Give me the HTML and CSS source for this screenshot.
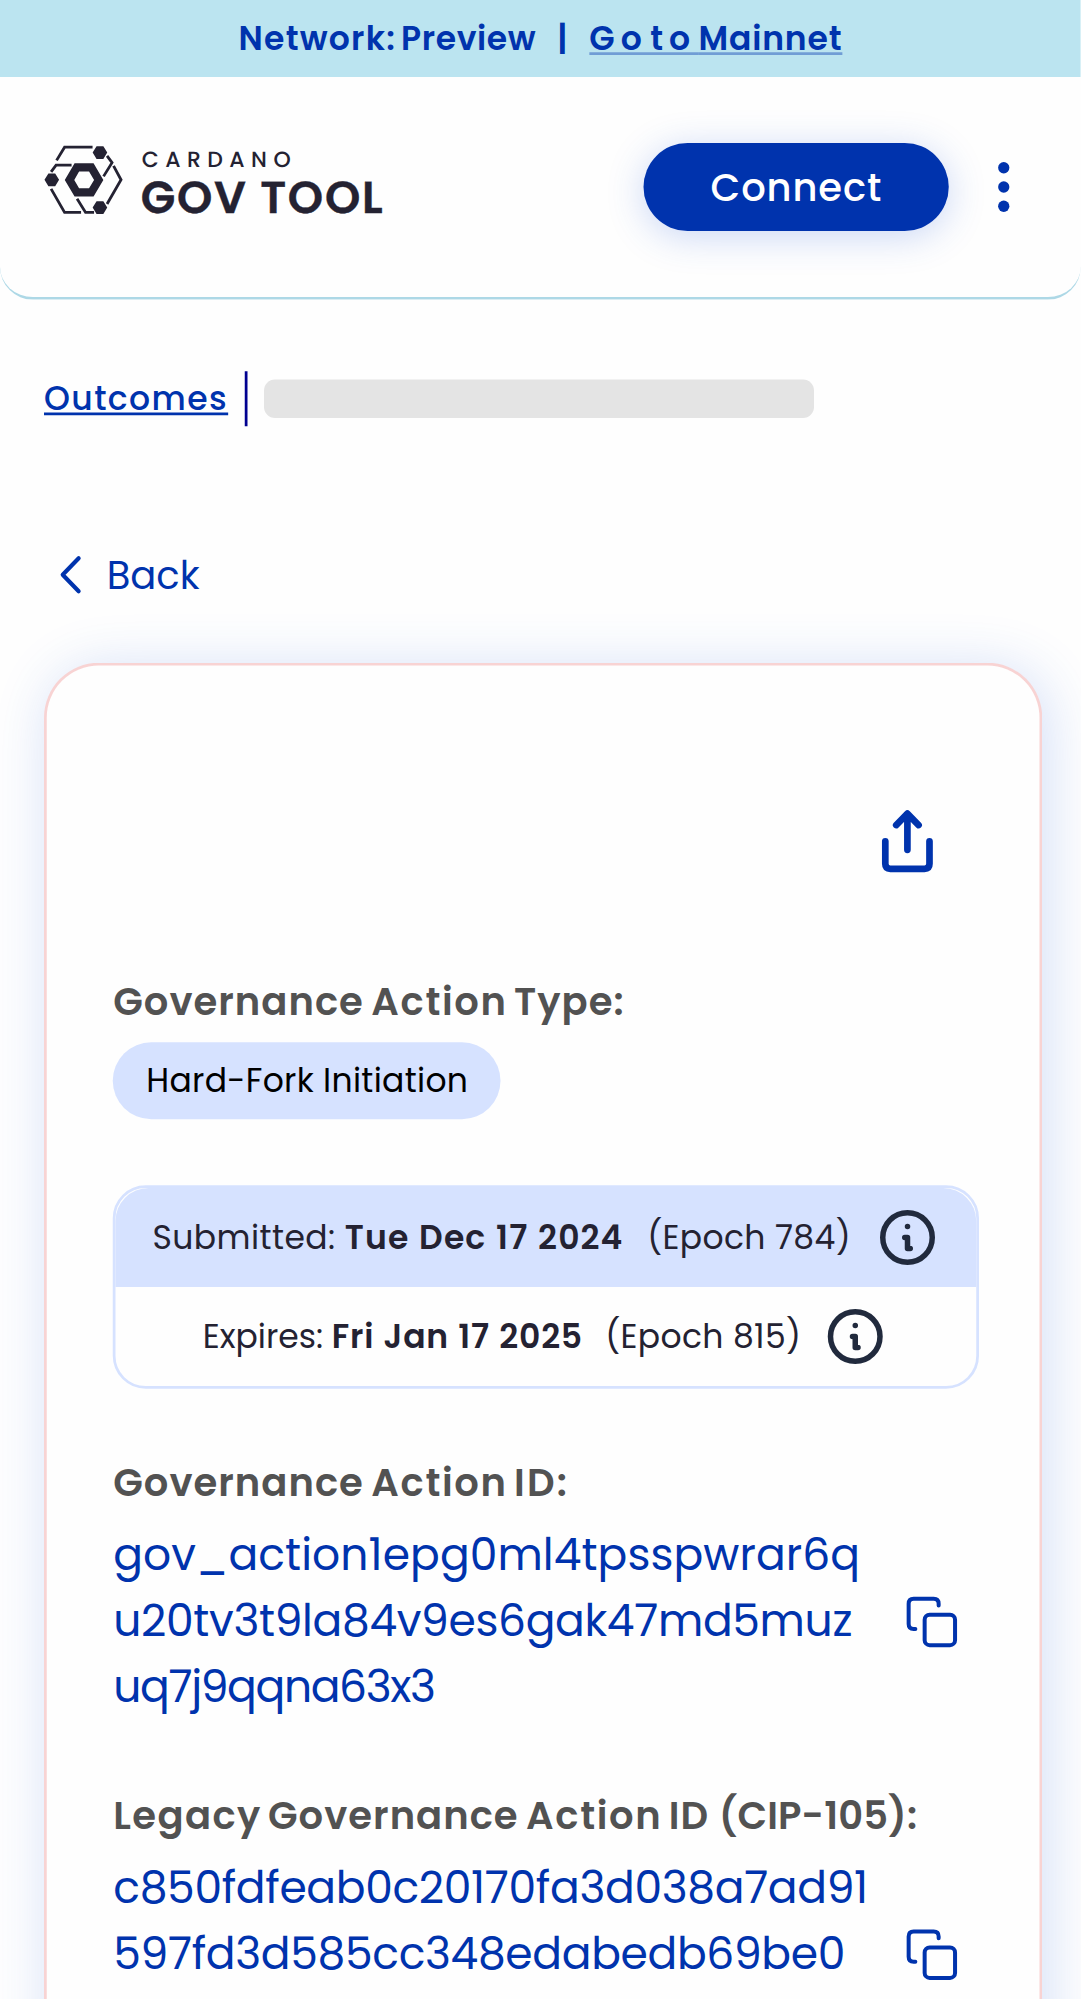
FILE: index.html
```
<!DOCTYPE html>
<html lang="en">
<head>
<meta charset="utf-8">
<title>Cardano GovTool</title>
<link rel="stylesheet" href="styles.css">
</head>
<body>
<div class="page">
<div class="network-bar">
  <span class="network-name">Network: <span class="network-value">Preview</span></span>
  <span class="network-sep">|</span>
  <a class="network-link"><span class="wide">Go to </span>Mainnet</a>
</div>
<header class="topbar">
  <svg class="brand" viewBox="0 -1.900 345 70" fill="none" stroke="#242232" stroke-width="2.8">
    <path d="M12.500 15.500 20.500 2.300H48.500M63 11 68 17.800 59.500 31.500"/>
    <path d="M7 27 12 20.200H27.500"/>
    <path d="M69.500 21 77 34.900 63 59.200"/>
    <path d="M7 44 20.500 67.600H37M33 54 41.500 67.600H50"/>
    <g fill="#242232" stroke="none">
      <path d="M52.500 1.300h6.800l3.900 6.400-3.900 6.400h-6.800l-3.900-6.400zM4.300 28.500h6.800l3.900 6.400-3.900 6.400H4.300L.4 34.900zM52.500 56.300h6.800l3.900 6.400-3.900 6.400h-6.800l-3.900-6.400z"/>
      <path fill-rule="evenodd" d="M30.500 18.300h19L59.300 35 49.500 51.700h-19L20.700 35zM35 26.700 30.200 35 35 43.300h10L50 35l-5-8.300z"/>
      <text class="brand-top" x="97.700" y="22" textLength="149">CARDANO</text>
      <text class="brand-name" x="96.700" y="68" textLength="242">GOV TOOL</text>
    </g>
  </svg>
  <div class="actions">
    <button class="connect">Connect</button>
    <svg width="24" height="24" viewBox="0 0 24 24" fill="#0033ad"><circle cx="12" cy="5" r="2.050"/><circle cx="12" cy="12" r="2.050"/><circle cx="12" cy="19" r="2.050"/></svg>
  </div>
</header>
<nav class="crumbs"><a class="crumb-link">Outcomes</a><span class="crumb-sep"></span><span class="skeleton"></span></nav>
<div class="back"><svg width="8" height="14" viewBox=".4 0 8 14" fill="none" stroke="#0033ad" stroke-width="1.500" stroke-linecap="round" stroke-linejoin="round"><path d="M7 1 1.200 7 7 13"/></svg><span>Back</span></div>
<main class="card">
  <div class="share"><svg width="18.550" height="22.730" viewBox="-1.900 1.400 51 62.500" fill="none" stroke="#0033ad" stroke-width="6.700" stroke-linecap="round" stroke-linejoin="round"><path d="M3.400 31.400V54q0 5 5 5H42.600q5 0 5-5V31.400M25.500 40V4M14.300 15.200 25.500 3.800 36.700 15.200"/></svg></div>
  <h2 class="label">Governance <span class="word-action">Action </span>Type:</h2>
  <div class="chip">Hard-Fork Initiation</div>
  <section class="dates">
    <div class="date-row date-row-on"><p><span class="date-name">Submitted: </span><b>Tue Dec 17 2024</b><span class="epoch">(Epoch 784)</span></p>
      <svg class="info" width="24" height="24" viewBox="0 0 24 24"><circle cx="12" cy="12" r="9"/><path d="M11 12h1v4h1M12 8h.01"/></svg></div>
    <div class="date-row date-row-end"><p>Expires: <b>Fri Jan 17 2025</b><span class="epoch">(Epoch 815)</span></p>
      <svg class="info" width="24" height="24" viewBox="0 0 24 24"><circle cx="12" cy="12" r="9"/><path d="M11 12h1v4h1M12 8h.01"/></svg></div>
  </section>
  <h2 class="label">Governance <span class="word-action">Action </span><span class="word-id">ID:</span></h2>
  <div class="id-row">
    <p class="hash"><span class="line-full">gov_action1epg0ml4tpsspwrar6q</span><br>u20tv3t9la84v9es6gak47md5muz<br><span class="line-tight">uq7j9qqna63x3</span></p>
    <svg class="copy" viewBox="-1.900 1 50.400 50.400"><rect x="18" y="18" width="30.400" height="30.400" rx="5"/><path d="M8.700 32.300H7q-5 0-5-5V7q0-5 5-5H27q5 0 5 5v1.700"/></svg>
  </div>
  <h2 class="label"><span class="word-legacy">Legacy </span>Governance <span class="word-action">Action </span>ID <span class="word-cip">(CIP-105):</span></h2>
  <div class="id-row id-row-legacy">
    <p class="hash">c850fdfeab0c20170fa3d038a7ad91<br>597fd3d585cc348edabedb69be0</p>
    <svg class="copy" viewBox="-1.900 1 50.400 50.400"><rect x="18" y="18" width="30.400" height="30.400" rx="5"/><path d="M8.700 32.300H7q-5 0-5-5V7q0-5 5-5H27q5 0 5 5v1.700"/></svg>
  </div>
</main>
</div>
</body>
</html>
```
FILE: styles.css
```
* { box-sizing: border-box; }
html, body { height: 1999px; overflow: hidden; }
body { margin: 0; background: #fefefe; }
h2, p { margin: 0; }
svg { overflow: visible; }

/* Phone layout, 393 units wide, enlarged to the window */
.page {
  width: 393.090px;
  height: 726.900px;
  overflow: hidden;
  transform: scale(2.75);
  transform-origin: 0 0;
  display: flex;
  flex-direction: column;
  color: #242232;
  background: #fefefe;
  font-family: Poppins, Inter, "Liberation Sans", sans-serif;
  font-size: 12px;
  white-space: nowrap;
}
.page > * { flex-shrink: 0; }

.network-bar {
  height: 28px;
  display: flex;
  justify-content: center;
  background: #bbe4f0;
  color: #0033ad;
  font-weight: 600;
  line-height: 28px;
}
.network-name { letter-spacing: .45px; word-spacing: -1.500px; }
.network-value { letter-spacing: .22px; }
.network-sep { margin: 0 8px 0 7.600px; }
.network-link { letter-spacing: .3px; text-decoration: underline; text-decoration-color: rgba(0, 51, 173, .4); }
.wide { letter-spacing: 2.200px; word-spacing: -4.200px; }

.topbar {
  height: 81px;
  padding: 24px 16px;
  display: flex;
  justify-content: space-between;
  background: #fefefe;
  border-bottom: 1px solid #add8e6;
  border-radius: 0 0 12px 12px;
}
.brand { width: 125.450px; height: 25.450px; }
.brand text { text-rendering: geometricPrecision; }
.brand-top { font-size: 22px; font-weight: 500; }
.brand-name { font-size: 45px; font-weight: 600; stroke: #242232; stroke-width: .4px; }
.actions { display: flex; align-items: center; gap: 8px; }
.connect {
  width: 111px;
  height: 32px;
  padding: 0;
  border: 0;
  border-radius: 16px;
  background: #0033ad;
  color: #fff;
  font: 500 14px Poppins, Inter, sans-serif;
  letter-spacing: .32px;
  box-shadow: 0 2px 13px rgba(47, 98, 220, .25);
}

.crumbs { height: 20px; margin: 26px 0 0 16px; display: flex; color: #0033ad; }
.crumb-link { font-weight: 500; line-height: 20px; letter-spacing: .52px; text-decoration: underline; }
.crumb-sep { width: 1px; margin: 0 6px; background: #000090; }
.skeleton { width: 200px; height: 14px; margin-top: 3.400px; border-radius: 4px; background: #e4e4e4; }

.back { height: 22px; margin: 43.500px 0 0 21.700px; display: flex; align-items: center; color: #0033ad; font-size: 14px; }
.back svg { margin-bottom: 1.200px; }
.back span { margin-left: 9.100px; }

.card {
  flex: 1;
  width: 362.800px;
  margin: 20.500px 0 0 16.200px;
  padding: 52.900px 22px 0 24px;
  border: 1px solid #f8d3d3;
  border-bottom: 0;
  border-radius: 20px 20px 0 0;
  background: #fefefe;
  box-shadow: 2px 2px 20px rgba(47, 98, 220, .2);
}
.share { height: 22.730px; padding-right: 17px; display: flex; justify-content: flex-end; }
.label { margin-top: 24px; color: #525252; font-size: 14px; font-weight: 600; line-height: 21px; letter-spacing: .37px; word-spacing: -1px; }
.share + .label { margin-top: 36.400px; }
.word-action { letter-spacing: .6px; word-spacing: -1.600px; }
.word-id { letter-spacing: .8px; }
.word-legacy { letter-spacing: .5px; word-spacing: -1.500px; }
.word-cip { margin-left: .8px; letter-spacing: .04px; }
.chip { width: fit-content; height: 28px; margin-top: 4px; padding: 0 12px; border-radius: 14px; background: #d6e2ff; color: #000; line-height: 28px; letter-spacing: .11px; }

.dates { height: 74px; margin-top: 24px; border: 1px solid #d6e2ff; border-radius: 12px; }
.date-row { height: 36px; display: flex; align-items: center; justify-content: center; }
.date-row-on { background: #d6e2ff; border-radius: 12px 12px 0 0; }
.date-name { letter-spacing: .16px; }
.date-row b { font-weight: 600; letter-spacing: .4px; word-spacing: .3px; }
.date-row-end b { letter-spacing: .28px; }
.epoch { margin-left: 8.600px; letter-spacing: .13px; }
.date-row-end .epoch { margin-left: 8.100px; }
.info { margin-left: 8.300px; fill: none; stroke: #212a3d; stroke-width: 2; stroke-linecap: round; stroke-linejoin: round; }
.date-row-end .info { margin-left: 8px; }

.id-row { height: 72px; margin-top: 4.300px; padding-right: 8.200px; display: flex; justify-content: space-between; }
.id-row-legacy { margin-top: 3.500px; }
.hash { color: #0033ad; font-size: 16px; line-height: 24px; letter-spacing: -.12px; }
.line-full { letter-spacing: .03px; }
.line-tight { letter-spacing: -.49px; }
.copy { width: 18.330px; height: 18.330px; margin-top: 26.300px; fill: none; stroke: #0033ad; stroke-width: 4; stroke-linecap: round; stroke-linejoin: round; }
.id-row-legacy .copy { margin-top: 27.200px; }
```
